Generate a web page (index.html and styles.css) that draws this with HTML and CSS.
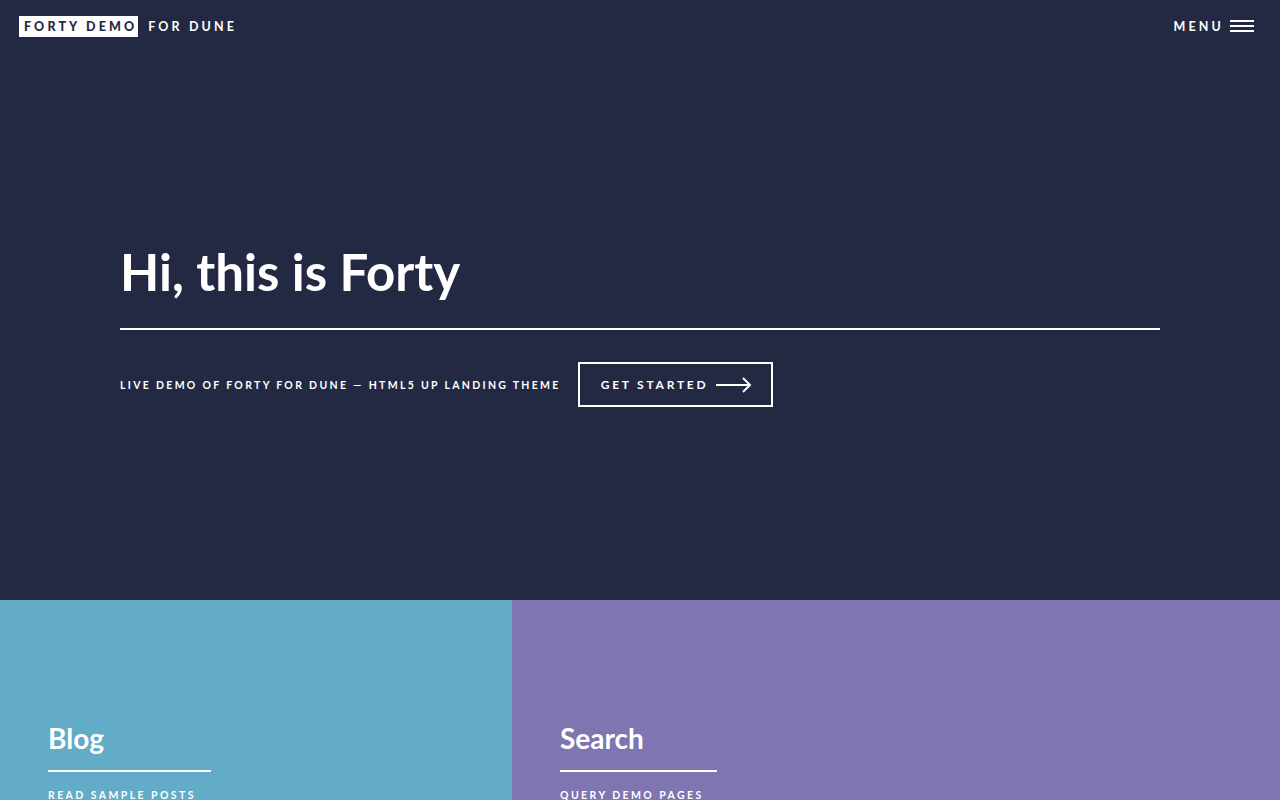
FILE: index.html
```html
<!DOCTYPE html>
<html>
<head>
<meta charset="utf-8">
<link rel="stylesheet" href="styles.css">
</head>
<body>
<header class="header">
  <a class="logo"><strong>Forty Demo</strong> <span>for Dune</span></a>
  <nav class="menu">Menu
    <svg class="burger" width="24" height="12" viewBox="0 0 24 12"><rect x="0" y="0" width="24" height="2" fill="#fff"/><rect x="0" y="5" width="24" height="2" fill="#fff"/><rect x="0" y="10" width="24" height="2" fill="#fff"/></svg>
  </nav>
</header>
<section class="banner">
  <div class="inner">
    <h1 class="title">Hi, this is Forty</h1>
    <div class="content">
      <p class="tagline">Live demo of Forty for Dune — HTML5 UP landing theme</p>
      <a class="button">Get Started
        <svg class="arrow" width="36" height="16" viewBox="0 0 36 16"><path d="M0 8 H34 M27 1 L34 8 L27 15" fill="none" stroke="#fff" stroke-width="2"/></svg>
      </a>
    </div>
  </div>
</section>
<section class="tiles">
  <article class="tile blue">
    <h3 class="tile-title wide">Blog</h3>
    <p class="tile-sub">Read sample posts</p>
  </article>
  <article class="tile purple">
    <h3 class="tile-title narrow">Search</h3>
    <p class="tile-sub">Query demo pages</p>
  </article>
</section>
</body>
</html>
```
FILE: styles.css
```css
* { box-sizing: border-box; }
html, body { margin: 0; padding: 0; }
body {
  background: #242943;
  color: #fff;
  font-family: "Lato", "Open Sans", sans-serif;
  overflow: hidden;
}
.header {
  height: 52px;
  display: flex;
  align-items: center;
  justify-content: space-between;
  padding: 0 26px 0 19px;
}
.logo {
  display: flex;
  align-items: center;
  font-size: 12.5px;
  font-weight: 700;
  letter-spacing: 0.25em;
  text-transform: uppercase;
}
.logo strong {
  background: #fff;
  color: #242943;
  padding: 3px 1px 3px 5px;
  height: 21px;
  display: flex;
  align-items: center;
  margin-right: 10px;
}
.menu {
  display: flex;
  align-items: center;
  font-size: 12.5px;
  font-weight: 700;
  letter-spacing: 0.25em;
  text-transform: uppercase;
}
.burger { margin-left: 6px; }
.banner {
  height: 548px;
  display: flex;
  align-items: center;
  padding-bottom: 4px;
}
.inner {
  width: 100%;
  padding: 0 120px;
}
.title {
  font-size: 51px;
  font-weight: 700;
  margin: 0;
  padding-bottom: 26px;
  border-bottom: 2px solid #fff;
  line-height: 1.2;
}
.content {
  display: flex;
  align-items: center;
  margin-top: 32px;
}
.tagline {
  margin: 0 17px 0 0;
  font-size: 10.5px;
  font-weight: 700;
  letter-spacing: 0.22em;
  text-transform: uppercase;
}
.button {
  display: flex;
  align-items: center;
  height: 45px;
  border: 2px solid #fff;
  padding: 0 19px 0 21px;
  font-size: 12px;
  font-weight: 700;
  letter-spacing: 0.23em;
  text-transform: uppercase;
}
.arrow { margin-left: 8px; }
.tiles {
  display: grid;
  grid-template-columns: 512px 1fr;
  height: 200px;
}
.tile { padding: 122px 48px 0; }
.blue { background: #63acc8; }
.purple { background: #7f75b0; }
.tile-title {
  display: inline-block;
  margin: 0;
  font-size: 28px;
  font-weight: 700;
  line-height: 1.2;
  padding-bottom: 14px;
  border-bottom: 2px solid #fff;
}
.tile-title.wide { width: 163px; }
.tile-title.narrow { width: 157px; }
.tile-sub {
  margin: 17px 0 0;
  font-size: 10.5px;
  font-weight: 700;
  letter-spacing: 0.23em;
  text-transform: uppercase;
}
```
